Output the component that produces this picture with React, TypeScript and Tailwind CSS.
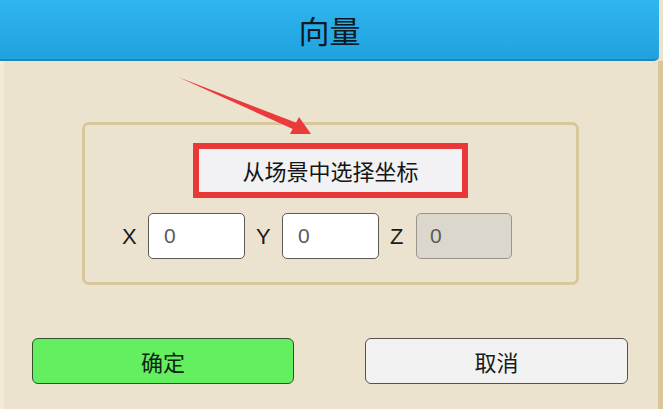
import React from 'react';

const cjk = { fontFamily: '"Noto Sans CJK SC", "Noto Sans", sans-serif' };
const latin = { fontFamily: '"Liberation Sans", Arial, sans-serif' };

function CoordInput({ label, value, disabled }: { label: string; value: string; disabled?: boolean }) {
  return (
    <div className="flex items-center">
      <span className="w-[26px] text-[22px] text-[#1b1b1b]" style={latin}>
        {label}
      </span>
      <div
        className={
          disabled
            ? 'flex h-[46px] w-[96px] items-center rounded-[5px] border border-[#9a9588] bg-[#dcd7cd] pl-[13px]'
            : 'flex h-[46px] w-[97px] items-center rounded-[5px] border border-[#5d5a55] bg-white pl-[15px]'
        }
      >
        <span className="text-[21px] text-[#5a5a5a]" style={latin}>
          {value}
        </span>
      </div>
    </div>
  );
}

export default function App() {
  return (
    <div className="relative flex h-[409px] w-[663px] flex-col overflow-hidden bg-[#ece3cf]">
      {/* header */}
      <div className="flex h-[61px] w-[659px] shrink-0 items-center justify-center rounded-br-[5px] border-b-2 border-[#1c87bb] bg-gradient-to-b from-[#2fb5ef] to-[#21a2df]">
        <h1 className="text-[31px] leading-none text-[#0f1a22]" style={cjk}>
          向量
        </h1>
      </div>

      {/* body */}
      <div className="flex flex-1 flex-col border-l-[4px] border-r-[5px] border-l-[#f3ebd8] border-r-[#d9c69b] pb-[25px]">
        <div className="ml-[78px] mt-[61px] flex h-[163px] w-[497px] flex-col rounded-[7px] border-[3px] border-[#d8c79a] bg-[#ebe2cf]">
          <div className="ml-[108px] mt-[18px] flex h-[55px] w-[275px] items-center justify-center border-[6px] border-[#ea3737] bg-[#f2f1f3]">
            <span className="text-[22px] text-[#151515]" style={cjk}>
              从场景中选择坐标
            </span>
          </div>
          <div className="ml-[37px] mt-[15px] flex items-center gap-[11px]">
            <CoordInput label="X" value="0" />
            <CoordInput label="Y" value="0" />
            <CoordInput label="Z" value="0" disabled />
          </div>
        </div>

        <div className="mt-auto flex items-center pl-[28px]">
          <button className="flex h-[46px] w-[262px] items-center justify-center rounded-[6px] border border-[#33512f] bg-[#63ef5f]">
            <span className="text-[22px] text-[#10230f]" style={cjk}>
              确定
            </span>
          </button>
          <button className="ml-[71px] flex h-[46px] w-[263px] items-center justify-center rounded-[6px] border border-[#555350] bg-[#f3f2f2]">
            <span className="text-[22px] text-[#1a1a1a]" style={cjk}>
              取消
            </span>
          </button>
        </div>
      </div>

      {/* annotation arrow */}
      <svg className="pointer-events-none absolute left-0 top-0" width="663" height="409">
        <polygon points="178,77 297,123 295,130" fill="#ea3a3a" />
        <polygon points="311,134 290,134 299,117" fill="#ea3a3a" />
      </svg>
    </div>
  );
}
